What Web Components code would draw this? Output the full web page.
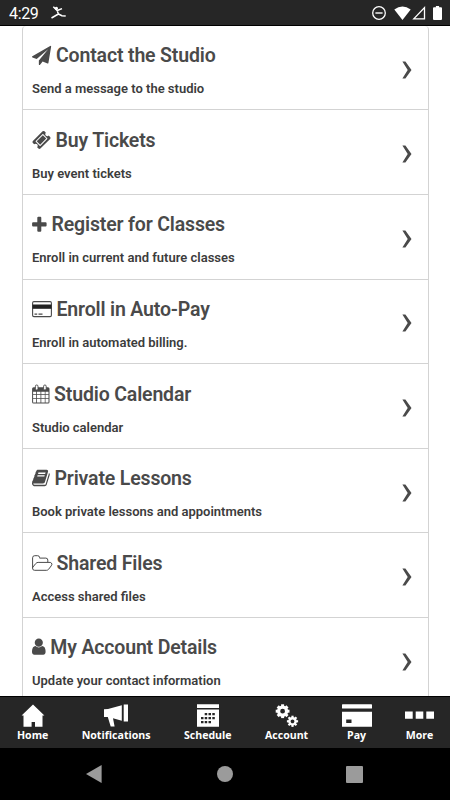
<!DOCTYPE html>
<html lang="en"><head><meta charset="utf-8"><title>Studio menu</title>
<style>html,body{margin:0;height:100%;overflow:hidden;background:#fff}</style></head>
<body><studio-app></studio-app>
<script>
const define=(name,html)=>customElements.define(name,class extends HTMLElement{
  connectedCallback(){
    if(this.shadowRoot)return;
    const t=document.createElement('template');
    t.innerHTML=typeof html==='function'?html(this):html;
    this.attachShadow({mode:'open'}).append(t.content.cloneNode(true));
  }
});
/* Each glyph: [width, height, markup]; one unit is one pixel. */
const fa=(d,x,y,s)=>`<g transform="translate(${x} ${y}) scale(${s})"><path d="${d}"/></g>`;
const icons={
plane:[19.500,20,fa('M1764 11q33 24 27 64l-256 1536q-5 29-32 45-14 8-31 8-11 0-24-5l-453-185-242 295q-18 23-49 23-13 0-22-4-19-7-30.5-23.5t-11.5-36.5v-349l864-1059-1069 925-395-162q-37-14-40-55-2-40 32-59l1664-960q15-9 32-9 20 0 36 11z',0,0.8,0.0107)],
ticket:[19,20,fa('M1024 452l316 316-572 572-316-316zm-211 979l618-618q19-19 19-45t-19-45l-362-362q-18-18-45-18t-45 18l-618 618q-19 19-19 45t19 45l362 362q18 18 45 18t45-18zm889-637l-907 908q-37 37-90.5 37t-90.5-37l-126-126q56-56 56-136t-56-136-136-56-136 56l-125-126q-37-37-37-90.5t37-90.5l907-906q37-37 90.5-37t90.5 37l125 125q-56 56-56 136t56 136 136 56 136-56l126 125q37 37 37 90.5t-37 90.5z',-0.1,0.4,0.0107)],
plus:[15,20,'<path d="M5.300 3.700q0-1 1-1h2q1 0 1 1v4.500h4.300q1 0 1 1v2.200q0 1-1 1H9.300v4.300q0 1-1 1h-2q-1 0-1-1v-4.300H1.100q-1 0-1-1V9.200q0-1 1-1h4.200z"/>'],
card:[20,20,'<rect x=".6" y="2.600" width="18.800" height="15" rx="1.300" fill="none" stroke="currentColor" stroke-width="1.100"/><rect x=".5" y="5.500" width="19" height="4.300" fill="#222"/><path d="M2.500 14.600h2.700v1.100H2.500zM6.500 14.600h4v1.100h-4z"/>'],
calendar:[17.600,20,'<path fill-rule="evenodd" d="M1.600 3.200H16q1.500 0 1.500 1.500v13.200q0 1.500-1.500 1.500H1.600Q.1 19.400.1 17.900V4.700Q.1 3.200 1.600 3.200zM1.100 7.700v2.600h3.100V7.700zM5 7.700v2.600h3.500V7.700zM9.300 7.700v2.600h3.500V7.700zM13.500 7.700v2.600h3V7.700zM1.100 11.100v3.200h3.100v-3.200zM5 11.100v3.200h3.500v-3.200zM9.300 11.100v3.200h3.500v-3.200zM13.500 11.100v3.200h3v-3.200zM1.100 15.100v3.300h3.100v-3.300zM5 15.100v3.300h3.500v-3.300zM9.300 15.100v3.300h3.500v-3.300zM13.500 15.100v3.300h3v-3.300z"/><rect x="3.400" y="1" width="2.600" height="5" rx="1.200" fill="#fff" stroke="currentColor" stroke-width=".9"/><rect x="11.600" y="1" width="2.600" height="5" rx="1.200" fill="#fff" stroke="currentColor" stroke-width=".9"/>'],
book:[18,20,fa('M1703 478q40 57 18 129l-275 906q-19 64-76.5 107.5t-122.5 43.5h-923q-77 0-148.5-53.5t-99.5-131.5q-24-67-2-127 0-4 3-27t4-37q1-8-3-21.5t-3-19.5q2-11 8-21t16.5-23.5 16.5-23.5q23-38 45-91.5t30-91.5q3-10 .5-30t-.5-28q3-11 17-28t17-23q21-36 42-92t25-90q1-9-2.500-32t.5-28q4-13 22-30.500t22-22.500q19-26 42.500-84.500t27.500-96.500q1-8-3-25.500t-2-26.500q2-8 9-18t18-23 17-21q8-12 16.500-30.500t15-35 16-36 19.500-32 26.500-23.500 36-11.500 47.500 5.500l-1 3q38-9 51-9h761q74 0 114 56t18 130l-274 906q-36 119-71.500 153.500t-128.500 34.500h-869q-27 0-38 15-11 16-1 43 24 70 144 70h923q29 0 56-15.500t35-41.500l300-987q7-22 5-57 38 15 59 43zm-1064 2q-4 13 2 22.500t20 9.500h608q13 0 25.500-9.500t16.500-22.500l21-64q4-13-2-22.500t-20-9.500h-608q-13 0-25.500 9.500t-16.500 22.500zm-83 256q-4 13 2 22.500t20 9.500h608q13 0 25.500-9.500t16.500-22.500l21-64q4-13-2-22.500t-20-9.500h-608q-13 0-25.500 9.500t-16.500 22.500z',-.7,.4,.0107)],
folder:[20,20,'<path fill="none" stroke="currentColor" stroke-width="1" d="M.6 15.500V4.800Q.6 2.700 2.700 2.700h2.900q2 0 2 2v.4h6.200q2 0 2 2v2.100M.6 15.500q0 1.800 2 1.800h11.900q1.200 0 2-.9l2.700-3.500q1.400-1.800.2-2.900-.6-.6-1.400-.6H6.100q-1.400 0-2.300 1.100L.8 14.200Q.3 15 .6 15.500"/>'],
user:[13.800,20,fa('M1536 1399q0 109-62.500 187t-150.500 78h-854q-88 0-150.500-78t-62.500-187q0-85 8.500-160.500t31.500-152 58.500-131 94-89 134.500-34.500q131 128 313 128t313-128q76 0 134.500 34.500t94 89 58.500 131 31.500 152 8.500 160.500zm-256-887q0 159-112.500 271.500t-271.500 112.500-271.500-112.500-112.500-271.500 112.500-271.500 271.500-112.500 271.500 112.500 112.500 271.500z',-2.700,.2,.0106)],
chevron:[10,18,'<path d="M.4.4h3L9.500 9l-6.100 8.600h-3L5.700 9z"/>'],
home:[24,24,'<path d="M12 .4 23.400 11.400H21.500V22.700H14v-4.800h-3.400v4.800H2.500V11.400H.6z"/>'],
horn:[26,24,'<path d="M1 5.300 5 5 18.800 1.200v15.500L10 14.300l1.600 8.200H7.700L4.800 12.900H1zM20.700.6H25v16.800h-4.300z"/>'],
schedule:[22,24,'<path fill-rule="evenodd" d="M0 .3h22v3.600H0zM0 5.500h22v17.300H0zM7.700 9v2.300h2.500V9zM11.500 9v2.300H14V9zM15.300 9v2.300h2.500V9zM4 12.900v2.300h2.500v-2.300zM7.700 12.900v2.300h2.500v-2.300zM11.500 12.900v2.300H14v-2.300zM15.300 12.900v2.300h2.500v-2.300zM4 17v2.300h2.500V17zM7.700 17v2.300h2.500V17zM11.500 17v2.300H14V17z"/>'],
gears:[24,24,(()=>{const gear=(cx,cy,r,k,w)=>`<g transform="translate(${cx} ${cy})"><circle r="${r}" fill="none" stroke="currentColor" stroke-width="${k}"/>${[0,45,90,135,180,225,270,315].map(a=>`<rect x="${-w/2}" y="${-r-k/2-1.300}" width="${w}" height="2.200" transform="rotate(${a})"/>`).join('')}</g>`;return gear(7.600,7.200,4,3.200,3)+gear(17.500,17.300,3.100,2.400,2.200)})()],
pay:[30,24,'<rect y=".3" width="30" height="4.200" rx=".6"/><path fill-rule="evenodd" d="M0 7.800h30v15H0zM4.200 15.500v3.600h5.300v-3.600z"/>'],
more:[29,24,'<path d="M0 7.400h7.700v7.300H0zM10.700 7.400h7.600v7.300h-7.600zM21.300 7.400H29v7.300h-7.700z"/>'],
dancer:[15,14,'<circle cx="5.400" cy="2.300" r="1.600"/><path fill="none" stroke="currentColor" stroke-width="1.500" d="M2.300.7 6.200 4.500 11 2.600M6.200 4.500 7.400 8.200M7.400 8 .5 12M7.400 8l3.500 1.700 3.800.3"/>'],
dnd:[16,16,'<circle cx="8" cy="8" r="6.300" fill="none" stroke="currentColor" stroke-width="1.300"/><path d="M4.400 7.300h7.200v1.400H4.400z"/>'],
wifi:[17,14,'<path d="M.3 3.600Q8.500-2.700 16.700 3.600L8.500 13.900z"/>'],
signal:[14,14,'<path fill="none" stroke="currentColor" stroke-width="1.300" d="M12.500 1.600v11.200H1.800z"/>'],
battery:[9,14,'<path d="M2.900 0h3.200v1.200H8q1 0 1 1V13q0 1-1 1H1q-1 0-1-1V2.200q0-1 1-1h1.900z"/>'],
back:[16,18,'<path d="M15.600 0v18L0 9z"/>'],
circle:[16,16,'<circle cx="8" cy="8" r="8"/>'],
square:[17,17,'<rect width="17" height="17" rx="1"/>']
};
define('ui-icon',el=>{const[w,h,m]=icons[el.getAttribute('name')];
return `<style>:host{display:block;flex:none;width:${w}px;height:${h}px}svg{display:block;overflow:visible;fill:currentColor}</style><svg width="${w}" height="${h}" viewBox="0 0 ${w} ${h}">${m}</svg>`});
define('status-bar',`<style>:host{box-sizing:border-box;display:flex;align-items:center;height:26px;padding:1px 8px 0 9px;background:#262626;border-bottom:1px solid #000;color:#fff;font:400 16px/24px Roboto,sans-serif}
span{width:42px;padding-top:2px;letter-spacing:-.35px}.r{margin-left:auto;display:flex;align-items:center}.w{margin-left:7px}.s{margin-left:1px}.b{margin-left:7px}</style>
<span>4:29</span><ui-icon name="dancer"></ui-icon><div class="r"><ui-icon name="dnd"></ui-icon><ui-icon class="w" name="wifi"></ui-icon><ui-icon class="s" name="signal"></ui-icon><ui-icon class="b" name="battery"></ui-icon></div>`);
define('menu-row',el=>`<style>:host{box-sizing:border-box;display:flex;align-items:center;justify-content:space-between;height:84.600px;padding:0 16px 0 9px;border-bottom:1px solid #d3d3d3;color:#4a4a4a}
.m{padding-top:7.500px}.t{display:flex;align-items:center;gap:4.500px;height:24px;font:600 19.500px/24px Roboto,sans-serif;letter-spacing:-.16px;color:#4a4a4a;white-space:nowrap}
.t ui-icon{margin-bottom:2px}
h2{font:inherit;margin:0}p{margin:12px 0 0;font:600 13px/18px Roboto,sans-serif;color:#3c3c3c;white-space:nowrap}
.c{padding-top:4px}</style>
<div class="m"><div class="t"><ui-icon name="${el.getAttribute('icon')}"></ui-icon><h2><slot name="title"></slot></h2></div><p><slot></slot></p></div><ui-icon class="c" name="chevron"></ui-icon>`);
define('menu-list',`<style>:host{box-sizing:border-box;display:block;height:670px;overflow:hidden;margin:0 21px 0 22px;border:1px solid #d3d3d3;border-width:0 1px;border-radius:4px 4px 0 0}div{margin-top:-.250px}</style><div><slot></slot></div>`);
define('tab-item',el=>`<style>:host{display:flex;flex-direction:column;align-items:center;color:#fff;font:700 10.600px/14px "Open Sans",sans-serif;white-space:nowrap}</style><ui-icon name="${el.getAttribute('icon')}"></ui-icon><span><slot></slot></span>`);
define('tab-bar',`<style>:host{box-sizing:border-box;display:flex;justify-content:space-between;height:52px;padding:7px 16px 0 17px;background:#262626;border-top:1px solid #000}</style><slot></slot>`);
define('system-nav',`<style>:host{display:flex;align-items:center;justify-content:space-between;height:52px;box-sizing:border-box;padding:0 87px 0 86px;background:#000;color:#9b9b9b}[name=circle]{margin-left:2px}</style><ui-icon name="back"></ui-icon><ui-icon name="circle"></ui-icon><ui-icon name="square"></ui-icon>`);
const rows=[['plane','Contact the Studio','Send a message to the studio'],['ticket','Buy Tickets','Buy event tickets'],['plus','Register for Classes','Enroll in current and future classes'],['card','Enroll in Auto-Pay','Enroll in automated billing.'],['calendar','Studio Calendar','Studio calendar'],['book','Private Lessons','Book private lessons and appointments'],['folder','Shared Files','Access shared files'],['user','My Account Details','Update your contact information']];
const tabs=[['home','Home'],['horn','Notifications'],['schedule','Schedule'],['gears','Account'],['pay','Pay'],['more','More']];
define('studio-app',`<style>:host{display:flex;flex-direction:column;width:450px;height:800px;background:#fff}</style><status-bar></status-bar><menu-list>${rows.map(([i,t,d])=>`<menu-row icon="${i}"><span slot="title">${t}</span>${d}</menu-row>`).join('')}</menu-list><tab-bar>${tabs.map(([i,t])=>`<tab-item icon="${i}">${t}</tab-item>`).join('')}</tab-bar><system-nav></system-nav>`);
</script></body></html>
